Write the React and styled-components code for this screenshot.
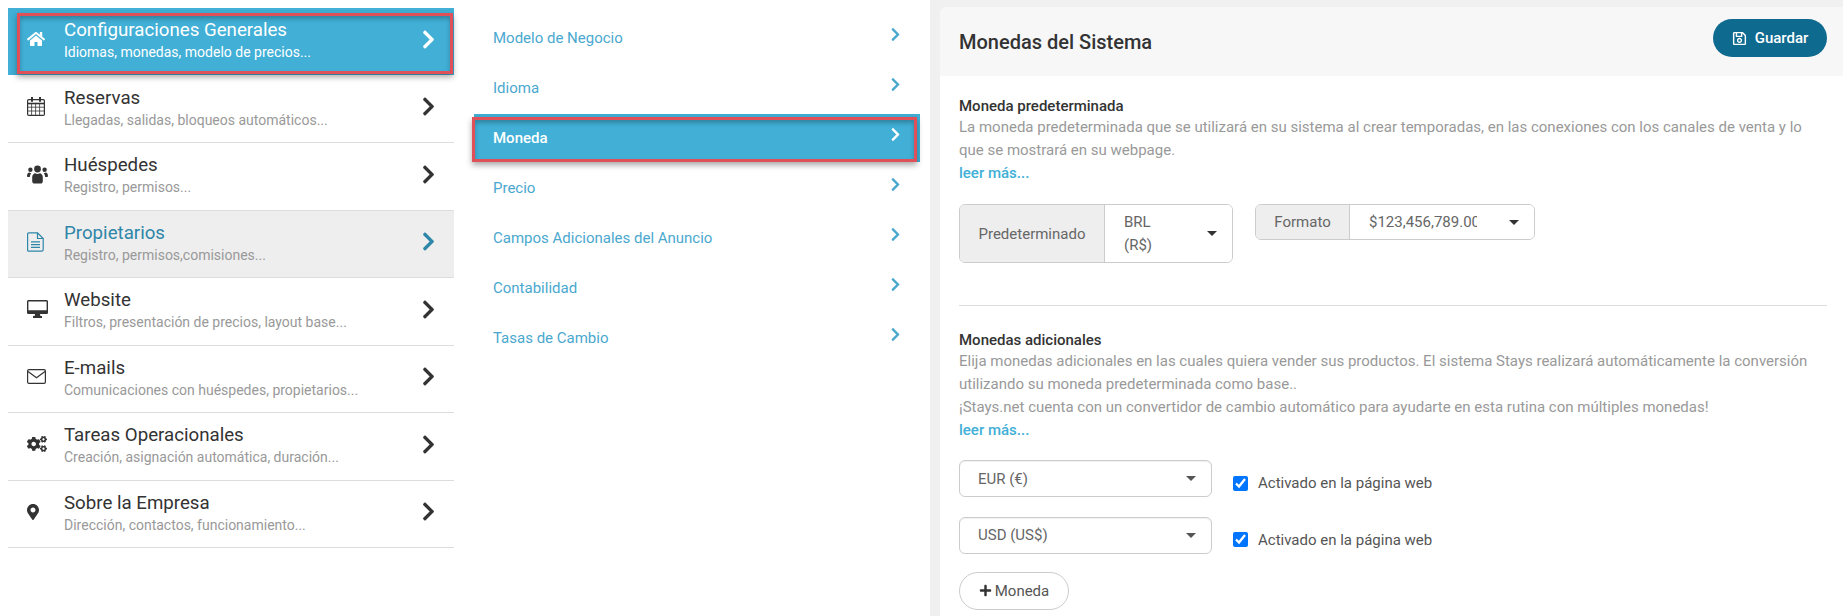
import React from 'react';
import styled, { createGlobalStyle } from 'styled-components';
import {
  FaHome,
  FaCogs,
  FaMapMarkerAlt,
  FaChevronRight,
  FaRegSave,
  FaPlus,
} from 'react-icons/fa';

const GlobalStyle = createGlobalStyle`
  html, body {
    margin: 0;
    height: 616px;
    overflow: hidden;
    background: #fff;
    font-family: Roboto, "Liberation Sans", sans-serif;
  }
  * { box-sizing: border-box; }
`;

const Page = styled.div`
  display: flex;
  width: 1843px;
  height: 616px;
  overflow: hidden;
`;

const MainMenu = styled.nav`
  width: 446px;
  margin: 8px 0 0 8px;
  flex-shrink: 0;
`;

const MenuRow = styled.div`
  position: relative;
  display: flex;
  align-items: center;
  height: 67.5px;
  padding: 0 15px 0 19px;
  border-bottom: 1px solid ${(p) => (p.$active ? '#fff' : '#dddddd')};
  background: ${(p) => (p.$active ? '#41afd6' : p.$hover ? '#eeeeee' : 'transparent')};
  color: ${(p) => (p.$active ? '#fff' : p.$hover ? '#2e86a8' : '#333')};
`;

const MenuIcon = styled.span`
  width: 38px;
  flex-shrink: 0;
  display: flex;
  align-items: center;
  margin-bottom: 4px;
`;

const MarkerIcon = styled(FaMapMarkerAlt)`
  font-size: 16px;
  margin-left: -2px;
`;

const MenuText = styled.div`
  flex: 1;
  min-width: 0;
`;

const MenuTitle = styled.div`
  font-size: 18.7px;
  line-height: 22px;
  margin-left: -1px;
`;

const MenuSub = styled.div`
  font-size: 14px;
  line-height: 20px;
  margin: 1px 0 1px -1px;
  color: ${(p) => (p.$active ? '#fff' : '#999')};
`;

const MenuChevron = styled(FaChevronRight)`
  font-size: 21px;
  flex-shrink: 0;
  margin-bottom: 4px;
`;

const Highlight = styled.div`
  position: absolute;
  top: ${(p) => p.$top}px;
  left: ${(p) => p.$left}px;
  right: ${(p) => p.$right}px;
  bottom: ${(p) => p.$bottom}px;
  border: 3px solid #df5058;
  box-shadow: 0 3px 6px rgba(0, 0, 0, 0.35), inset 0 3px 4px rgba(0, 0, 0, 0.25);
  pointer-events: none;
`;

const SubMenu = styled.nav`
  width: 446px;
  margin: 13px 10px 0 20px;
  flex-shrink: 0;
`;

const SubRow = styled.div`
  position: relative;
  display: flex;
  align-items: center;
  justify-content: space-between;
  height: ${(p) => (p.$active ? 48 : 50)}px;
  margin: ${(p) => (p.$active ? '1px 0' : '0')};
  padding: 0 17px 0 19px;
  font-size: 15px;
  font-weight: ${(p) => (p.$active ? 500 : 400)};
  color: ${(p) => (p.$active ? '#fff' : '#4aa8cf')};
  background: ${(p) => (p.$active ? '#41afd6' : 'transparent')};
`;

const SubChevron = styled(FaChevronRight)`
  font-size: 15px;
  margin-bottom: 8px;
`;

const Panel = styled.section`
  flex: 1;
  min-width: 0;
  background: #f0f0f0;
  padding: 7px 0 0 10px;
`;

const Card = styled.div`
  background: #fff;
  height: 100%;
  border-radius: 8px 0 0 0;
`;

const CardHeader = styled.header`
  display: flex;
  align-items: center;
  justify-content: space-between;
  height: 69px;
  padding: 0 16px 0 19px;
  background: #f7f7f8;
  border-radius: 8px 0 0 0;
`;

const CardTitle = styled.h1`
  margin: 0;
  font-size: 20px;
  font-weight: 500;
  color: #333;
`;

const SaveButton = styled.button`
  display: flex;
  align-items: center;
  justify-content: center;
  gap: 8px;
  width: 114px;
  height: 38px;
  margin-bottom: 7px;
  border: none;
  border-radius: 19px;
  background: #0f6a8f;
  color: #fff;
  font: 500 15px Roboto, sans-serif;
  svg { font-size: 15px; }
`;

const CardBody = styled.div`
  padding: 20px 16px 0 19px;
`;

const SectionTitle = styled.h2`
  margin: 0;
  font-size: 15px;
  line-height: 20px;
  font-weight: 500;
  color: #333;
`;

const Description = styled.p`
  margin: 0;
  font-size: 15px;
  line-height: 23px;
  color: #999;
`;

const ReadMore = styled.a`
  display: block;
  font-size: 15px;
  line-height: 23px;
  font-weight: 500;
  color: #41afd6;
`;

const GroupRow = styled.div`
  display: flex;
  align-items: flex-start;
  gap: 22px;
  margin-top: 19px;
`;

const InputGroup = styled.div`
  display: flex;
  width: ${(p) => p.$width}px;
  height: ${(p) => p.$height}px;
  border: 1px solid #ccc;
  border-radius: 6px;
  overflow: hidden;
  font-size: 15px;
  color: #666;
`;

const Addon = styled.div`
  display: flex;
  align-items: center;
  justify-content: center;
  width: ${(p) => p.$width}px;
  flex-shrink: 0;
  background: #eee;
  border-right: 1px solid #ccc;
`;

const SelectValue = styled.div`
  flex: 1;
  display: flex;
  align-items: center;
  justify-content: space-between;
  min-width: 0;
  padding: 0 15px 0 19px;
  line-height: 23px;
  white-space: nowrap;
  background: #fff;
`;

const ClippedValue = styled.span`
  width: 108px;
  overflow: hidden;
`;

const Caret = styled.span`
  width: 0;
  height: 0;
  flex-shrink: 0;
  border-left: 5px solid transparent;
  border-right: 5px solid transparent;
  border-top: 5px solid ${(p) => p.$color || '#333'};
`;

const Divider = styled.hr`
  margin: 42px 0 24px;
  border: none;
  border-top: 1px solid #ddd;
`;

const CurrencyList = styled.div`
  display: flex;
  flex-direction: column;
  gap: 19.5px;
  margin-top: 18px;
`;

const CurrencyRow = styled.div`
  display: flex;
  align-items: flex-start;
  gap: 21px;
`;

const CurrencySelect = styled.div`
  display: flex;
  align-items: center;
  justify-content: space-between;
  width: 253px;
  height: 37px;
  padding: 0 15px 0 18px;
  border: 1px solid #ccc;
  border-radius: 6px;
  font-size: 15px;
  color: #666;
  box-shadow: inset 0 1px 1px rgba(0, 0, 0, 0.06);
`;

const CheckLabel = styled.label`
  display: flex;
  align-items: center;
  gap: 10px;
  margin-top: 15px;
  font-size: 15px;
  line-height: 16px;
  color: #555;
`;

const Check = styled.input`
  width: 15px;
  height: 15px;
  margin: 0;
`;

const AddButton = styled.button`
  display: flex;
  align-items: center;
  justify-content: center;
  gap: 3px;
  width: 110px;
  height: 38px;
  margin-top: 18px;
  background: #fff;
  border: 1px solid #ccc;
  border-radius: 19px;
  color: #555;
  font: 400 15px Roboto, sans-serif;
  svg { color: #333; font-size: 13px; }
`;

const CalendarIcon = () => (
  <svg width="18" height="19" viewBox="0 0 18 19" fill="none" stroke="currentColor">
    <rect x="0.6" y="2.6" width="16.8" height="15.8" rx="1.2" strokeWidth="1.2" />
    <path d="M1 6.5h16" strokeWidth="1.6" />
    <path d="M1 10.2h16M1 14h16M4.6 6.5V18M8.6 6.5V18M12.6 6.5V18" strokeWidth="0.8" />
    <path d="M5 0.5v3.5M13 0.5v3.5" strokeWidth="2" strokeLinecap="round" />
  </svg>
);

const UsersIcon = () => (
  <svg width="21" height="19" viewBox="0 0 21 19" fill="currentColor">
    <circle cx="10.5" cy="4" r="3.4" />
    <circle cx="3.4" cy="4.8" r="2.2" />
    <circle cx="17.6" cy="4.8" r="2.2" />
    <path d="M5.2 12.2c0-2.3 1.7-3.7 3-3.9.7.5 1.4.8 2.3.8s1.6-.3 2.3-.8c1.3.2 3 1.6 3 3.9v4c0 1.5-1 2.3-2.3 2.3H7.5c-1.3 0-2.3-.8-2.3-2.3z" />
    <path d="M0 11.2c0-2 1-3.6 2.3-3.6.6.4 1.2.6 2 .6-.9.9-1.4 2.2-1.4 3.8H1c-.6 0-1-.3-1-.8zM21 11.2c0-2-1-3.6-2.3-3.6-.6.4-1.2.6-2 .6.9.9 1.4 2.2 1.4 3.8H20c.6 0 1-.3 1-.8z" />
  </svg>
);

const FileIcon = () => (
  <svg width="17" height="20" viewBox="0 0 17 20" fill="none" stroke="currentColor" strokeWidth="1.2">
    <path d="M1.8.8h8.7l5.7 5.7v11c0 1-.7 1.7-1.7 1.7H1.8C1 19.2.6 18.6.6 18V2C.6 1.3 1 .8 1.8.8z" />
    <path d="M10.5.8v5.7h5.7M4 9.8h9M4 12.6h9M4 15.4h9" />
  </svg>
);

const DesktopIcon = () => (
  <svg width="21" height="18" viewBox="0 0 21 18" fill="currentColor">
    <path d="M1.6 0h17.8c.9 0 1.6.7 1.6 1.6v10.8c0 .9-.7 1.6-1.6 1.6H13l.4 2h1.6v2H6v-2h1.6l.4-2H1.6C.7 14 0 13.3 0 12.4V1.6C0 .7.7 0 1.6 0zM1.4 1.4v8.8h18.2V1.4z" fillRule="evenodd" />
  </svg>
);

const EnvelopeIcon = () => (
  <svg width="19" height="15" viewBox="0 0 19 15" fill="none" stroke="currentColor" strokeWidth="1.2">
    <rect x="0.6" y="0.6" width="17.8" height="13.8" rx="1.4" />
    <path d="M1 2.5l8.5 6.3L18 2.5" />
  </svg>
);

const menu = [
  { icon: <FaHome size={18} />, title: 'Configuraciones Generales', sub: 'Idiomas, monedas, modelo de precios...', active: true },
  { icon: <CalendarIcon />, title: 'Reservas', sub: 'Llegadas, salidas, bloqueos automáticos...' },
  { icon: <UsersIcon />, title: 'Huéspedes', sub: 'Registro, permisos...' },
  { icon: <FileIcon />, title: 'Propietarios', sub: 'Registro, permisos,comisiones...', hover: true },
  { icon: <DesktopIcon />, title: 'Website', sub: 'Filtros, presentación de precios, layout base...' },
  { icon: <EnvelopeIcon />, title: 'E-mails', sub: 'Comunicaciones con huéspedes, propietarios...' },
  { icon: <FaCogs size={20} />, title: 'Tareas Operacionales', sub: 'Creación, asignación automática, duración...' },
  { icon: <MarkerIcon />, title: 'Sobre la Empresa', sub: 'Dirección, contactos, funcionamiento...' },
];

const subMenu = ['Modelo de Negocio', 'Idioma', 'Moneda', 'Precio', 'Campos Adicionales del Anuncio', 'Contabilidad', 'Tasas de Cambio'];

export default function App() {
  return (
    <Page>
      <GlobalStyle />
      <MainMenu>
        {menu.map((item) => (
          <MenuRow key={item.title} $active={item.active} $hover={item.hover}>
            <MenuIcon>{item.icon}</MenuIcon>
            <MenuText>
              <MenuTitle>{item.title}</MenuTitle>
              <MenuSub $active={item.active}>{item.sub}</MenuSub>
            </MenuText>
            <MenuChevron />
            {item.active && <Highlight $top={5} $left={9} $right={1} $bottom={1} />}
          </MenuRow>
        ))}
      </MainMenu>

      <SubMenu>
        {subMenu.map((name) => (
          <SubRow key={name} $active={name === 'Moneda'}>
            {name}
            <SubChevron />
            {name === 'Moneda' && <Highlight $top={3} $left={-2} $right={3} $bottom={0} />}
          </SubRow>
        ))}
      </SubMenu>

      <Panel>
        <Card>
          <CardHeader>
            <CardTitle>Monedas del Sistema</CardTitle>
            <SaveButton>
              <FaRegSave />
              Guardar
            </SaveButton>
          </CardHeader>
          <CardBody>
            <SectionTitle>Moneda predeterminada</SectionTitle>
            <Description>
              La moneda predeterminada que se utilizará en su sistema al crear temporadas, en las conexiones con los canales de venta y lo que se mostrará en su webpage.
            </Description>
            <ReadMore>leer más...</ReadMore>
            <GroupRow>
              <InputGroup $width={274} $height={59}>
                <Addon $width={145}>Predeterminado</Addon>
                <SelectValue>
                  <span>BRL<br />(R$)</span>
                  <Caret />
                </SelectValue>
              </InputGroup>
              <InputGroup $width={280} $height={36}>
                <Addon $width={94}>Formato</Addon>
                <SelectValue>
                  <ClippedValue>$123,456,789.00</ClippedValue>
                  <Caret />
                </SelectValue>
              </InputGroup>
            </GroupRow>
            <Divider />
            <SectionTitle>Monedas adicionales</SectionTitle>
            <Description>
              Elija monedas adicionales en las cuales quiera vender sus productos. El sistema Stays realizará automáticamente la conversión utilizando su moneda predeterminada como base..
              <br />
              ¡Stays.net cuenta con un convertidor de cambio automático para ayudarte en esta rutina con múltiples monedas!
            </Description>
            <ReadMore>leer más...</ReadMore>
            <CurrencyList>
              {['EUR (€)', 'USD (US$)'].map((c) => (
                <CurrencyRow key={c}>
                  <CurrencySelect>
                    {c}
                    <Caret $color="#555" />
                  </CurrencySelect>
                  <CheckLabel>
                    <Check type="checkbox" defaultChecked />
                    Activado en la página web
                  </CheckLabel>
                </CurrencyRow>
              ))}
            </CurrencyList>
            <AddButton>
              <FaPlus />
              Moneda
            </AddButton>
          </CardBody>
        </Card>
      </Panel>
    </Page>
  );
}
